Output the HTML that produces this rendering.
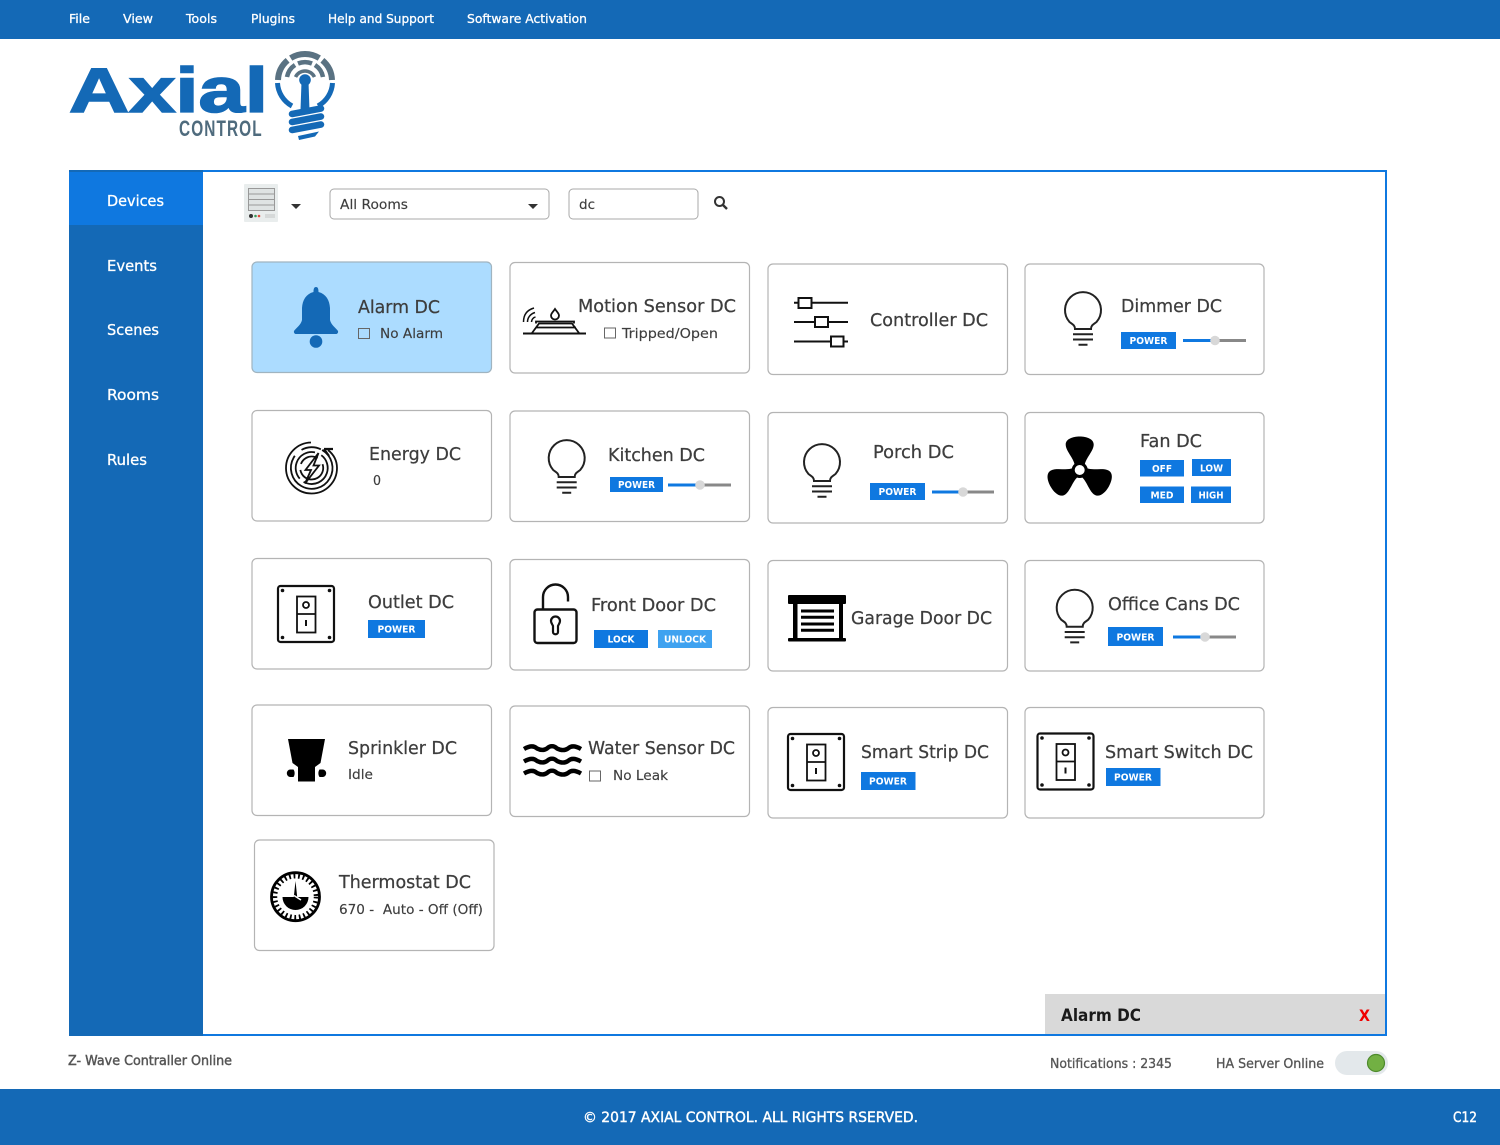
<!DOCTYPE html>
<html lang="en"><head><meta charset="utf-8"><title>Axial Control</title>
<style>
html,body{margin:0;padding:0;width:1500px;height:1145px;overflow:hidden;background:#fff}
svg{display:block}
text{font-family:"DejaVu Sans","Liberation Sans",sans-serif;fill:#3d3d3d;stroke:#3d3d3d;stroke-width:.25px;font-size:18px}
.m{font-size:12.5px;fill:#fff;stroke:#fff;stroke-width:.3px}
.n{font-size:15px;fill:#fff;stroke:#fff;stroke-width:.3px}
.s{font-size:13.5px;stroke-width:.15px}
.card{fill:#fff;stroke:#b4b4b4;stroke-width:1.2}
.b{font-size:10px;font-weight:bold;fill:#fff;stroke:none;text-anchor:middle}
.btn{fill:#0f78e0}
.cb{fill:none;stroke:#666;stroke-width:1}
.f{font-size:13px;fill:#555;stroke:#555;stroke-width:.3px}
</style></head><body>
<svg width="1500" height="1145" viewBox="0 0 1500 1145" xmlns="http://www.w3.org/2000/svg">
<defs>
<g id="bulb" fill="none" stroke="#222" stroke-width="2"><path d="M-8 19C-8 15-11 14-13.5 12A18 18 0 1 1 13.5 12C11 14 8 15 8 19Z"/><path d="M-10 24.3H10M-10 29.5H10M-4.5 34.7H4.5"/></g>
<g id="outlet"><rect x="1" y="1" width="56" height="56" rx="2.5" fill="none" stroke="#111" stroke-width="2.2"/><rect x="20" y="11.5" width="18.5" height="36" fill="none" stroke="#111" stroke-width="1.8"/><path d="M20 29H38.5" stroke="#111" stroke-width="1.8"/><circle cx="29" cy="20" r="3" fill="none" stroke="#111" stroke-width="1.8"/><path d="M29 35V41" stroke="#111" stroke-width="2"/><g fill="#111"><circle cx="5.5" cy="5.5" r="1.8"/><circle cx="52.5" cy="5.5" r="1.8"/><circle cx="5.5" cy="52.5" r="1.8"/><circle cx="52.5" cy="52.5" r="1.8"/></g></g>
<path id="blade" d="M-5-5C-6-12-14-19-14-25.5C-14-31-7-33.5 0-33.5C7-33.5 14-31 14-25.5C14-19 6-12 5-5Z" fill="#000"/>
<path id="wave" d="M524 1C530-2.5 534-2.5 537 .5C541 2.5 544 2.5 547 .5C550-2.5 554-2.5 557 .5C561 2.5 565 2.5 568 .5C571-2.5 575-2.5 581 1" fill="none" stroke="#000" stroke-width="4.4"/>
</defs>

<!-- top bar -->
<rect width="1500" height="39" fill="#1469b6"/>
<text class="m" x="69" y="23" textLength="21" lengthAdjust="spacingAndGlyphs">File</text>
<text class="m" x="123" y="23" textLength="30" lengthAdjust="spacingAndGlyphs">View</text>
<text class="m" x="186" y="23" textLength="31" lengthAdjust="spacingAndGlyphs">Tools</text>
<text class="m" x="251" y="23" textLength="44" lengthAdjust="spacingAndGlyphs">Plugins</text>
<text class="m" x="328" y="23" textLength="106" lengthAdjust="spacingAndGlyphs">Help and Support</text>
<text class="m" x="467" y="23" textLength="120" lengthAdjust="spacingAndGlyphs">Software Activation</text>

<!-- logo -->
<text x="69" y="112" textLength="199" lengthAdjust="spacingAndGlyphs" style="font-family:'Liberation Sans',sans-serif;font-size:63px;font-weight:bold;fill:#1469b6;stroke:#1469b6;stroke-width:1.6px">Axial</text>
<text transform="translate(179 136) scale(.7 1)" x="0" y="0" textLength="118" lengthAdjust="spacing" style="font-family:'Liberation Sans',sans-serif;font-size:22px;font-weight:bold;fill:#4f6b7d;stroke:none">CONTROL</text>
<g fill="none">
<g stroke="#5a7282"><path stroke-width="6" d="M278 80A27 27 0 0 1 287.6 60.3M290.7 58.1A27 27 0 0 1 319.3 58.1M322.4 60.3A27 27 0 0 1 332 80"/>
<path stroke-width="4.5" d="M287 77A18.5 18.5 0 0 1 295 65M298 63.500A18.5 18.5 0 0 1 312 63.500M315 65A18.5 18.5 0 0 1 323 77"/>
<path stroke-width="3.500" d="M295.500 77A10.500 10.500 0 0 1 314.500 77"/></g>
<path stroke="#1469b6" stroke-width="5" d="M277.500 83A28 28 0 0 0 292 106M332.500 83A28 28 0 0 1 318 106"/></g>
<circle cx="305" cy="80" r="5.800" fill="#1469b6"/><path d="M301.500 82H308.500L309.500 110H300.500Z" fill="#1469b6"/>
<path d="M292 114L321 108.500M292 122L321 116.500M292 130L321 124.500" stroke="#1469b6" stroke-width="6.500" stroke-linecap="round"/>
<path d="M298 136L319 131.500L315 136.500L299 140Z" fill="#1469b6"/>

<!-- main frame -->
<rect x="70" y="171" width="1316" height="864" fill="#fff" stroke="#0f78e0" stroke-width="2"/>
<rect x="69" y="170" width="134" height="866" fill="#1469b6"/>
<rect x="69" y="172" width="134" height="53" fill="#0f78e0"/>
<text class="n" x="107" y="206" textLength="57" lengthAdjust="spacingAndGlyphs">Devices</text>
<text class="n" x="107" y="271" textLength="50" lengthAdjust="spacingAndGlyphs">Events</text>
<text class="n" x="107" y="335" textLength="52" lengthAdjust="spacingAndGlyphs">Scenes</text>
<text class="n" x="107" y="400" textLength="52" lengthAdjust="spacingAndGlyphs">Rooms</text>
<text class="n" x="107" y="465" textLength="40" lengthAdjust="spacingAndGlyphs">Rules</text>

<!-- toolbar -->
<rect x="244" y="184" width="34" height="38" rx="1" fill="#e9eded"/>
<rect x="248.500" y="188.500" width="26" height="22" fill="#dfe3e3" stroke="#999"/>
<path d="M248.500 194H274.500M248.500 199.500H274.500M248.500 205H274.500" stroke="#999"/>
<circle cx="251" cy="216" r="2" fill="#333"/><circle cx="255.500" cy="216" r="1.300" fill="#3a9a5a"/><circle cx="259" cy="216" r="1.300" fill="#e24a3a"/>
<path d="M266 214V218M268 214V218M270 214V218M272 214V218M274 214V218" stroke="#bbb" stroke-width=".8"/>
<path d="M291 204H301L296 209Z" fill="#333"/>
<rect x="330" y="189" width="219" height="30" rx="4" fill="#fff" stroke="#a8a8a8" stroke-width="1"/>
<text class="s" x="340" y="209" textLength="68" lengthAdjust="spacingAndGlyphs">All Rooms</text>
<path d="M528 204H538L533 209Z" fill="#333"/>
<rect x="569" y="189" width="129" height="30" rx="4" fill="#fff" stroke="#a8a8a8" stroke-width="1"/>
<text class="s" x="579" y="209" textLength="16" lengthAdjust="spacingAndGlyphs">dc</text>
<circle cx="719.500" cy="201.500" r="4.500" fill="none" stroke="#333" stroke-width="2"/><path d="M723 205L727 209" stroke="#333" stroke-width="2.400"/>

<!-- Alarm -->
<rect x="252" y="262" width="239.500" height="110.500" rx="5" fill="#acdcff" stroke="#a0b4c0" stroke-width="1.200"/>
<path d="M316 287C318 287 318.500 289 318.500 292C326 294 329.500 300 330 308V320C331 325 336 328 338 331C338.500 333 337 334 336 334H296C295 334 293.500 333 294 331C296 328 301 325 302 320V308C302.500 300 306 294 313.500 292C313.500 289 314 287 316 287Z" fill="#1469b6"/>
<circle cx="316" cy="341.500" r="6.300" fill="#1469b6"/>
<text x="358" y="313" textLength="82" lengthAdjust="spacingAndGlyphs">Alarm DC</text>
<rect class="cb" x="358.500" y="328.500" width="11" height="10"/>
<text class="s" x="380" y="338" textLength="63" lengthAdjust="spacingAndGlyphs">No Alarm</text>

<!-- Motion -->
<rect class="card" x="510" y="262.500" width="239.500" height="110.500" rx="5"/>
<path d="M523 333.500H586" stroke="#111" stroke-width="2"/>
<path d="M532 333L539 323.500H572L579 333M536 327.500H576M536 323.500V321.500H574V323.500" fill="none" stroke="#111" stroke-width="1.800"/>
<path d="M555 309C557 312 559 313.500 559 315.500A4 4 0 0 1 551 315.500C551 313.500 553 312 555 309Z" fill="none" stroke="#111" stroke-width="1.800"/>
<path d="M523.500 322C523.500 315 527 310 534 308M527.500 322C527.500 318 530 314 535 312.500M531.500 322C531.500 320 533 317.500 535.500 317" fill="none" stroke="#111" stroke-width="1.500"/>
<text x="578" y="312" textLength="158" lengthAdjust="spacingAndGlyphs">Motion Sensor DC</text>
<rect class="cb" x="604.500" y="328" width="11" height="10"/>
<text class="s" x="622" y="338" textLength="96" lengthAdjust="spacingAndGlyphs">Tripped/Open</text>

<!-- Controller -->
<rect class="card" x="768" y="264" width="239.500" height="110.500" rx="5"/>
<g fill="#fff" stroke="#111" stroke-width="2"><path d="M794 302.700H848M794 322H848M794 341.500H848" fill="none"/><rect x="798.500" y="298" width="13" height="10"/><rect x="815" y="317" width="13" height="10"/><rect x="831" y="336.500" width="12.500" height="10"/></g>
<text x="870" y="326" textLength="118" lengthAdjust="spacingAndGlyphs">Controller DC</text>

<!-- Dimmer -->
<rect class="card" x="1025" y="264" width="239" height="110.500" rx="5"/>
<use href="#bulb" x="1083" y="310"/>
<text x="1121" y="312" textLength="101" lengthAdjust="spacingAndGlyphs">Dimmer DC</text>
<rect class="btn" x="1121" y="332" width="55" height="17"/><text class="b" x="1148.500" y="344" textLength="38" lengthAdjust="spacingAndGlyphs">POWER</text>
<path d="M1183 340.500H1215" stroke="#0f78e0" stroke-width="3"/><path d="M1215 340.500H1246" stroke="#888" stroke-width="3"/><circle cx="1215" cy="340.500" r="4.800" fill="#d8d8d8"/>

<!-- Energy -->
<rect class="card" x="252" y="410.500" width="239.500" height="110.500" rx="5"/>
<g fill="none" stroke="#111" stroke-width="1.800">
<path d="M311 442.500A25.500 25.500 0 1 0 337 468C337 460 333 454 328 450"/>
<circle cx="311.700" cy="468" r="20.800" stroke-dasharray="100 9 20 2" transform="rotate(-60 311.700 468)"/>
<circle cx="311.700" cy="468" r="16" stroke-dasharray="28 5 40 7" transform="rotate(20 311.700 468)"/>
<circle cx="311.700" cy="468" r="11.500" stroke-dasharray="22 6 20 8" transform="rotate(60 311.700 468)"/>
<path d="M318.500 453L305.500 470H311L305 483.500L319 465.500H313.500Z" fill="#fff"/>
<path d="M324 449H333M324 449L329 456" stroke-width="2.200"/>
</g>
<text x="369" y="460" textLength="92" lengthAdjust="spacingAndGlyphs">Energy DC</text>
<text class="s" x="373" y="485" textLength="8" lengthAdjust="spacingAndGlyphs">0</text>

<!-- Kitchen -->
<rect class="card" x="510" y="411" width="239.500" height="110.500" rx="5"/>
<use href="#bulb" x="566.700" y="458"/>
<text x="608" y="461" textLength="97" lengthAdjust="spacingAndGlyphs">Kitchen DC</text>
<rect class="btn" x="610" y="477" width="53" height="15"/><text class="b" x="636.500" y="488" textLength="37" lengthAdjust="spacingAndGlyphs">POWER</text>
<path d="M668 485H700" stroke="#0f78e0" stroke-width="3"/><path d="M700 485H731" stroke="#888" stroke-width="3"/><circle cx="700" cy="485" r="4.800" fill="#d8d8d8"/>

<!-- Porch -->
<rect class="card" x="768" y="412.500" width="239.500" height="110.500" rx="5"/>
<use href="#bulb" x="822" y="462"/>
<text x="873" y="458" textLength="81" lengthAdjust="spacingAndGlyphs">Porch DC</text>
<rect class="btn" x="870" y="483" width="55" height="17"/><text class="b" x="897.500" y="495" textLength="38" lengthAdjust="spacingAndGlyphs">POWER</text>
<path d="M932 492H963" stroke="#0f78e0" stroke-width="3"/><path d="M963 492H994" stroke="#888" stroke-width="3"/><circle cx="963" cy="492" r="4.800" fill="#d8d8d8"/>

<!-- Fan -->
<rect class="card" x="1025" y="412.500" width="239" height="110.500" rx="5"/>
<g transform="translate(1079.700 470)"><use href="#blade"/><use href="#blade" transform="rotate(120)"/><use href="#blade" transform="rotate(240)"/><circle r="8" fill="#000"/><circle r="5" fill="#fff"/></g>
<text x="1140" y="447" textLength="62" lengthAdjust="spacingAndGlyphs">Fan DC</text>
<rect class="btn" x="1140" y="460" width="44" height="16.500"/><text class="b" x="1162" y="472" textLength="20" lengthAdjust="spacingAndGlyphs">OFF</text>
<rect class="btn" x="1192" y="459" width="39" height="17"/><text class="b" x="1211.500" y="471.500" textLength="23" lengthAdjust="spacingAndGlyphs">LOW</text>
<rect class="btn" x="1140" y="486.500" width="44" height="16.500"/><text class="b" x="1162" y="498.500" textLength="23" lengthAdjust="spacingAndGlyphs">MED</text>
<rect class="btn" x="1191" y="486.500" width="40" height="16.500"/><text class="b" x="1211" y="498.500" textLength="25" lengthAdjust="spacingAndGlyphs">HIGH</text>

<!-- Outlet -->
<rect class="card" x="252" y="558.500" width="239.500" height="110.500" rx="5"/>
<use href="#outlet" x="277" y="585"/>
<text x="368" y="608" textLength="86" lengthAdjust="spacingAndGlyphs">Outlet DC</text>
<rect class="btn" x="368" y="620" width="57" height="18"/><text class="b" x="396.500" y="632.500" textLength="38" lengthAdjust="spacingAndGlyphs">POWER</text>

<!-- Front Door -->
<rect class="card" x="510" y="559.500" width="239.500" height="110.500" rx="5"/>
<rect x="534.500" y="609.500" width="42" height="33.500" rx="3" fill="none" stroke="#111" stroke-width="2.400"/>
<path d="M543 609V597A12.500 12.500 0 0 1 568 597V601.500" fill="none" stroke="#111" stroke-width="2.400"/>
<path d="M551 621A4.500 4.500 0 0 1 560 621C560 623 558.500 624.500 558 626V632C558 635 553 635 553 632V626C552.500 624.500 551 623 551 621Z" fill="none" stroke="#111" stroke-width="2.200"/>
<text x="591" y="611" textLength="125" lengthAdjust="spacingAndGlyphs">Front Door DC</text>
<rect class="btn" x="594" y="630" width="54" height="18"/><text class="b" x="621" y="642.500" textLength="27" lengthAdjust="spacingAndGlyphs">LOCK</text>
<rect x="658" y="630" width="54" height="18" fill="#3fa2f0"/><text class="b" x="685" y="642.500" textLength="42" lengthAdjust="spacingAndGlyphs">UNLOCK</text>

<!-- Garage -->
<rect class="card" x="768" y="560.500" width="239.500" height="110.500" rx="5"/>
<rect x="788" y="595" width="58" height="9" rx="1" fill="#000"/>
<rect x="793" y="603" width="4.500" height="36" fill="#000"/><rect x="839" y="603" width="4" height="36" fill="#000"/>
<rect x="788" y="638" width="58" height="3.500" rx="1" fill="#000"/>
<path d="M801 611H834M801 617.300H834M801 624H834M801 630.300H834" stroke="#000" stroke-width="3"/>
<text x="851" y="624" textLength="141" lengthAdjust="spacingAndGlyphs">Garage Door DC</text>

<!-- Office -->
<rect class="card" x="1025" y="560.500" width="239" height="110.500" rx="5"/>
<use href="#bulb" x="1074.700" y="607.700"/>
<text x="1108" y="610" textLength="132" lengthAdjust="spacingAndGlyphs">Office Cans DC</text>
<rect class="btn" x="1108" y="627" width="55" height="19"/><text class="b" x="1135.500" y="640.500" textLength="38" lengthAdjust="spacingAndGlyphs">POWER</text>
<path d="M1173 637H1205" stroke="#0f78e0" stroke-width="3"/><path d="M1205 637H1236" stroke="#888" stroke-width="3"/><circle cx="1205" cy="637" r="4.800" fill="#d8d8d8"/>

<!-- Sprinkler -->
<rect class="card" x="252" y="705" width="239.500" height="110.500" rx="5"/>
<path d="M288 739H325L320.500 763L315 767V781.500H298V767L292.500 763Z" fill="#000"/>
<path d="M293.500 769.500H290A3.800 3.800 0 0 0 290 777H293.500C295 775 295 771.500 293.500 769.500ZM319.500 769.500H323A3.800 3.800 0 0 1 323 777H319.500C318 775 318 771.500 319.500 769.500Z" fill="#000"/>
<text x="348" y="754" textLength="109" lengthAdjust="spacingAndGlyphs">Sprinkler DC</text>
<text class="s" x="348" y="779" textLength="25" lengthAdjust="spacingAndGlyphs">Idle</text>

<!-- Water -->
<rect class="card" x="510" y="706" width="239.500" height="110.500" rx="5"/>
<use href="#wave" y="748"/><use href="#wave" y="760.500"/><use href="#wave" y="772.500"/>
<text x="588" y="754" textLength="147" lengthAdjust="spacingAndGlyphs">Water Sensor DC</text>
<rect class="cb" x="589.500" y="771" width="11" height="10"/>
<text class="s" x="613" y="780" textLength="55" lengthAdjust="spacingAndGlyphs">No Leak</text>

<!-- Smart Strip -->
<rect class="card" x="768" y="707.500" width="239.500" height="110.500" rx="5"/>
<use href="#outlet" x="787" y="733"/>
<text x="861" y="758" textLength="128" lengthAdjust="spacingAndGlyphs">Smart Strip DC</text>
<rect class="btn" x="861" y="772" width="54.500" height="18"/><text class="b" x="888" y="784.500" textLength="38" lengthAdjust="spacingAndGlyphs">POWER</text>

<!-- Smart Switch -->
<rect class="card" x="1025" y="707.500" width="239" height="110.500" rx="5"/>
<use href="#outlet" x="1036.500" y="732.500"/>
<text x="1105" y="758" textLength="148" lengthAdjust="spacingAndGlyphs">Smart Switch DC</text>
<rect class="btn" x="1106" y="768" width="54.500" height="18"/><text class="b" x="1133" y="780.500" textLength="38" lengthAdjust="spacingAndGlyphs">POWER</text>

<!-- Thermostat -->
<rect class="card" x="254.500" y="840" width="239.500" height="110.500" rx="5"/>
<circle cx="295.500" cy="896.700" r="24" fill="none" stroke="#000" stroke-width="2.800"/>
<circle cx="295.500" cy="896.700" r="20.500" fill="none" stroke="#000" stroke-width="4.500" stroke-dasharray="1.800 2.700"/>
<path d="M282.500 897H308.500A13 13 0 0 1 282.500 897Z" fill="#000"/>
<path d="M293.800 897L295.500 881L297.200 897Z" fill="#000"/>
<path d="M294 895.500L301 900" stroke="#fff" stroke-width="1.500"/>
<text x="339" y="888" textLength="132" lengthAdjust="spacingAndGlyphs">Thermostat DC</text>
<text class="s" x="339" y="914" textLength="144" lengthAdjust="spacingAndGlyphs" xml:space="preserve">670 -  Auto - Off (Off)</text>

<!-- alert -->
<rect x="1045" y="994" width="340" height="40" fill="#d9d9d9"/>
<text x="1061" y="1021" textLength="80" lengthAdjust="spacingAndGlyphs" style="font-size:17px;font-weight:bold;fill:#1a1a1a;stroke:none">Alarm DC</text>
<text x="1359" y="1021" textLength="11" lengthAdjust="spacingAndGlyphs" style="font-size:16px;font-weight:bold;fill:#f00000;stroke:none">X</text>

<!-- status -->
<text class="f" x="68" y="1065" textLength="164" lengthAdjust="spacingAndGlyphs" style="stroke-width:.45px">Z- Wave Contraller Online</text>
<text class="f" x="1050" y="1068" textLength="122" lengthAdjust="spacingAndGlyphs">Notifications : 2345</text>
<text class="f" x="1216" y="1068" textLength="108" lengthAdjust="spacingAndGlyphs">HA Server Online</text>
<rect x="1335" y="1051" width="53" height="24" rx="12" fill="#e3e8eb"/>
<circle cx="1376" cy="1063" r="8.500" fill="#72b043" stroke="#4d8a2c" stroke-width="1.200"/>

<!-- footer -->
<rect y="1089" width="1500" height="56" fill="#1469b6"/>
<text x="583" y="1122" textLength="335" lengthAdjust="spacingAndGlyphs" style="font-size:14px;fill:#fff;stroke:#fff;stroke-width:.4px">© 2017 AXIAL CONTROL. ALL RIGHTS RSERVED.</text>
<text x="1453" y="1122" textLength="24" lengthAdjust="spacingAndGlyphs" style="font-size:14px;fill:#fff;stroke:#fff;stroke-width:.4px">C12</text>
</svg>
</body></html>
